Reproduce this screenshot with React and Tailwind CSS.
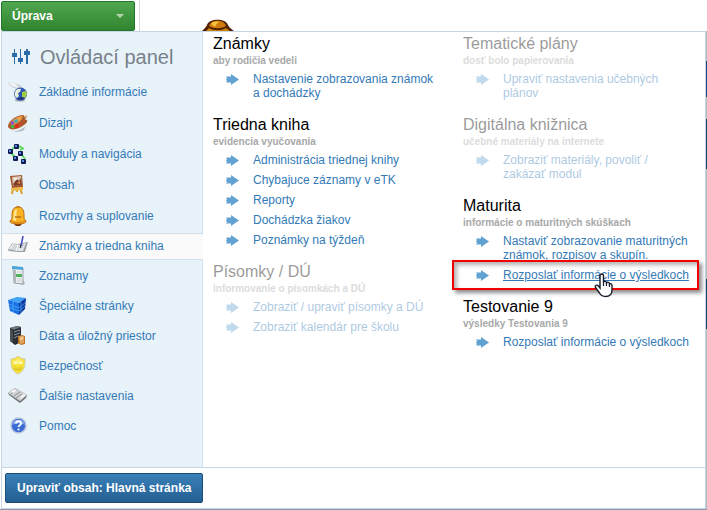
import { clsx } from 'clsx'

// Sidebar icons, all drawn on a 20x20 grid

function GlobeIcon() {
  return (
    <svg viewBox="0 0 20 20" className="size-5" aria-hidden="true">
      <path d="M0 0l11 2 4 4-5 2-8-4z" fill="#cfd5d9" />
      <path d="M1 1l8 2M3 3l7 2" stroke="#fff" strokeWidth="1.200" />
      <ellipse cx="12" cy="18" rx="5" ry="1.500" fill="#9aa4b4" />
      <circle cx="12.500" cy="12" r="6.500" fill="#2d55b5" />
      <path d="M7 10c1-3 4-4 6-3l-1 3-2 1 1 3-2 2c-2-1-3-3-2-6z" fill="#e6f3d8" />
      <path d="M14 10l4-1 1 3-2 4-3-1z" fill="#9fd043" />
      <path d="M9 17c3 2 6 1 8-1l-4-1z" fill="#22377c" />
    </svg>
  )
}

function PaletteIcon() {
  return (
    <svg viewBox="0 0 20 20" className="size-5" aria-hidden="true">
      <path d="M3 17c4 3 10 0 15-4l-3 5-7 1z" fill="#b3bbc0" />
      <path d="M0 13C1 7 9 2 15 2c4 1 1 4 3 5s1 3-2 5c-5 4-12 6-15 3-1-1-1-1-1-2z" fill="#ad5a2a" />
      <path d="M2 11C4 6 10 3 15 3l-2 5-7 4z" fill="#e09a56" />
      <circle cx="11.500" cy="5.500" r="1.700" fill="#f2a23a" />
      <circle cx="8" cy="8" r="1.800" fill="#31b3b8" />
      <circle cx="4.500" cy="10" r="1.700" fill="#8c4ad6" />
      <circle cx="4.500" cy="13.500" r="1.800" fill="#46b84c" />
      <circle cx="9" cy="13" r="2" fill="#e8261c" />
      <circle cx="13" cy="10" r="1.600" fill="#d6402a" />
      <path d="M12 9l7-6M14 11l5-4" stroke="#a35a2c" strokeWidth="1.300" />
      <path d="M16 4l3-1" stroke="#f0cf9e" strokeWidth="1.300" />
    </svg>
  )
}

function ModulesIcon() {
  const boxes = [[6, 0], [0, 5], [10, 7], [5, 12], [13, 15]]
  return (
    <svg viewBox="0 0 20 20" className="size-5" aria-hidden="true">
      <path d="M11 2l5 3M12 6l3-2M3 9l4 4M4 6l2-3M14 11l3 4" stroke="#58dc58" strokeWidth="1.800" fill="none" />
      {boxes.map(([x, y]) => (
        <g key={x}>
          <rect x={x} y={y} width="5" height="5" rx="1" fill="#101c55" />
          <rect x={x + 1} y={y + 1} width="2" height="2" fill="#5d8be0" />
        </g>
      ))}
    </svg>
  )
}

function EaselIcon() {
  return (
    <svg viewBox="0 0 20 20" className="size-5" aria-hidden="true">
      <path d="M5 12L4 19M12 13l2 6M9 12v5" stroke="#dc9f30" strokeWidth="2" />
      <path d="M2 1l12-1 1 12-11 1z" fill="#a5522b" />
      <path d="M4 2l9-1 1 9-9 1z" fill="#dccbbb" />
      <path d="M5 9l4-5 2 2 2-3 1 7-8 1z" fill="#7d3b2a" />
      <path d="M6 3h3v2H6z" fill="#f4efe7" />
      <path d="M9 8l3-2v3z" fill="#e39b48" />
      <path d="M3 13l12-1v3L4 16z" fill="#ecb94a" />
    </svg>
  )
}

function BellIcon() {
  return (
    <svg viewBox="0 0 20 20" className="size-5" aria-hidden="true">
      <ellipse cx="10" cy="18" rx="3.500" ry="2" fill="#70300c" />
      <circle cx="10" cy="2" r="2" fill="#b86a10" />
      <path d="M10 1C5 1 4 5 4 9s0 4-2 6c-1 4 17 4 16 0-2-2-2-2-2-6s-1-8-6-8z" fill="#f8b224" stroke="#b96a10" strokeWidth="1" />
      <path d="M8 3C5 5 6 10 5 14l3 1c1-4 0-8 1-11z" fill="#ffe58a" />
      <path d="M7 11h6" stroke="#b9741a" strokeWidth="1.500" />
      <path d="M3 15c3 2 11 2 14 0" stroke="#dd840f" fill="none" />
    </svg>
  )
}

function NotebookIcon() {
  return (
    <svg viewBox="0 0 20 20" className="size-5" aria-hidden="true">
      <path d="M0 14l4-7 6 1 10-2-3 10-7 0-9-1z" fill="#9aa1a8" />
      <path d="M1 13l4-6 6 2-2 6z" fill="#f3f4f5" />
      <path d="M11 9l7-2-3 8-6 0z" fill="#e3e6e8" />
      <path d="M5 9l4 0M4 11l5 0M3 13l5 0M13 10l3-1M12 12l3-1" stroke="#b3b9be" strokeWidth="1" />
      <path d="M15 0l-2 10" stroke="#4350c0" strokeWidth="1.600" />
      <path d="M13 9l-1 3" stroke="#23262d" strokeWidth="1" />
    </svg>
  )
}

function ListIcon() {
  return (
    <svg viewBox="0 0 20 20" className="size-5" aria-hidden="true">
      <path d="M6 17l10 2 1-2-2-3z" fill="#b7bfc4" />
      <path d="M5 1l10 1v16l-9-1z" fill="#eef1f2" stroke="#9aa2a8" strokeWidth="1" />
      <path d="M4 0l11 1v3L4 3z" fill="#4aa5d8" />
      <path d="M5 4l3 0v13l-2 0z" fill="#b1b8bb" />
      <path d="M8 8h6v3H8z" fill="#4cb35a" />
      <path d="M9 6h5M9 13h5M9 15h5" stroke="#c6ccd0" strokeWidth="1" />
    </svg>
  )
}

function CubeIcon() {
  return (
    <svg viewBox="0 0 20 20" className="size-5" aria-hidden="true">
      <path d="M0 4l9-3 9 1-7 5z" fill="#3d9df2" />
      <path d="M0 4l11 3v12l-9-4z" fill="#1c70e4" />
      <path d="M11 7l7-5-1 11-6 6z" fill="#0b35a0" />
      <path d="M1 8l10 4 7-6M1 11l10 4 6-5M5 3l8 3v11M12 2L5 6v10" stroke="#4db2fb" strokeWidth=".7" fill="none" />
    </svg>
  )
}

function ServerIcon() {
  return (
    <svg viewBox="0 0 20 20" className="size-5" aria-hidden="true">
      <path d="M2 2l7-2 4 1v15l-6 3-5-4z" fill="#2a2d31" />
      <path d="M2 2l7-2 4 1-7 3z" fill="#70757a" />
      <path d="M2 3l3 2v12l-3-2z" fill="#4a4e53" />
      <path d="M6 6l6-2M6 9l6-2M6 12l4-2" stroke="#8695ac" />
      <path d="M10 10l4-1 3 1v8l-4 1-3-2z" fill="#b97425" />
      <path d="M11 10l5 0v7l-4 1z" fill="#dfa35a" />
      <path d="M12 12l3-1v2l-3 1z" fill="#f6d59c" />
    </svg>
  )
}

function ShieldIcon() {
  return (
    <svg viewBox="0 0 20 20" className="size-5" aria-hidden="true">
      <path d="M3 3c3 0 5-1 7-3 2 2 4 3 7 3 0 8-1 12-7 15C4 15 3 11 3 3z" fill="#f7e33c" stroke="#d5cc9a" />
      <path d="M5 5c2 0 4-1 5-3 2 2 3 3 5 3v3H5z" fill="#fbef7c" />
      <path d="M5 10c2-1 3 1 5 1s3-2 5-1c0 3-2 5-5 6-3-1-5-3-5-6z" fill="#efd92a" />
      <path d="M6 7h3M11 7h3" stroke="#fffbd0" strokeWidth="1.500" />
      <path d="M6 12c2 2 5 2 8 0" stroke="#d0b92a" strokeWidth="1" fill="none" />
    </svg>
  )
}

function SettingsIcon() {
  return (
    <svg viewBox="0 0 20 20" className="size-5" aria-hidden="true">
      <path d="M0 7l7-5 12 7-1 3-6 5L1 9z" fill="#70757a" />
      <path d="M0 7l7-5 12 7-7 6z" fill="#d0d3d5" />
      <path d="M3 8l6-4M6 10l6-4M8 12l6-4" stroke="#8d9296" strokeWidth="1" />
      <path d="M5 4l4 0-3 3-3-1z" fill="#fafafa" />
      <path d="M12 11l4-3 2 1-5 4z" fill="#f3f4f4" />
    </svg>
  )
}

function HelpIcon() {
  return (
    <svg viewBox="0 0 20 20" className="size-5" aria-hidden="true">
      <circle cx="10.500" cy="9.500" r="7.500" fill="#3a6bd2" stroke="#b9c4e0" strokeWidth="1.500" />
      <path d="M4 9c1-7 12-7 13 0-4-2-9-2-13 0z" fill="#85aaeb" />
      <path d="M8 7.500c0-3 5-3 5 0 0 2-2.500 2-2.500 3.500" stroke="#fff" strokeWidth="1.800" fill="none" />
      <circle cx="10.500" cy="13.500" r="1.100" fill="#fff" />
    </svg>
  )
}

function SlidersIcon() {
  return (
    <svg viewBox="0 0 18 16" className="h-4 w-[18px]" fill="#2a6da6" aria-hidden="true">
      <path d="M2 0h1v15H2zM0 4h5v4H0z" />
      <path d="M8 0h1v15H8zM6 9h5v4H6z" />
      <path d="M14 0h2v15h-2zM12 2h6v4h-6z" />
    </svg>
  )
}

function ArrowIcon() {
  return (
    <svg viewBox="0 0 13 12" className="mt-0.5 ml-[13px] h-3 w-[13px] shrink-0" aria-hidden="true">
      <path d="M0 2.500h5V0l8 5.500L5 11V8.500H0l1-1.500-1-1.500 1-1.500z" fill="#62a2d3" />
    </svg>
  )
}

function HandCursor() {
  return (
    <svg viewBox="0 0 19 25" className="absolute -bottom-4 left-[131px] h-[25px] w-[19px]" aria-hidden="true">
      <path
        d="M6 15V3c0-2.600 3.500-2.600 3.500 0v6c.5-1 3-1 3 .7 1-.8 3-.3 3 1.200 1-.6 2.500 0 2.500 1.600V17c0 4-2.500 6.500-6.500 6.500-3 0-4.500-1-6-3.500l-4-5.500c-1-2 1.500-3.200 3-1.500z"
        fill="#fff"
        stroke="#1c1c2c"
        strokeWidth="1.400"
      />
      <path d="M9.500 9v4M12.500 10v3M15.500 11v3" stroke="#1c1c2c" strokeWidth="1.200" />
    </svg>
  )
}

const MENU = [
  { label: 'Základné informácie', icon: GlobeIcon, tall: true },
  { label: 'Dizajn', icon: PaletteIcon, tall: true },
  { label: 'Moduly a navigácia', icon: ModulesIcon, tall: true },
  { label: 'Obsah', icon: EaselIcon, tall: true },
  { label: 'Rozvrhy a suplovanie', icon: BellIcon },
  { label: 'Známky a triedna kniha', icon: NotebookIcon, active: true },
  { label: 'Zoznamy', icon: ListIcon },
  { label: 'Špeciálne stránky', icon: CubeIcon },
  { label: 'Dáta a úložný priestor', icon: ServerIcon },
  { label: 'Bezpečnosť', icon: ShieldIcon },
  { label: 'Ďalšie nastavenia', icon: SettingsIcon },
  { label: 'Pomoc', icon: HelpIcon },
]

const COLUMNS = [
  [
    { title: 'Známky', sub: 'aby rodičia vedeli', links: ['Nastavenie zobrazovania známok a dochádzky'] },
    {
      title: 'Triedna kniha',
      sub: 'evidencia vyučovania',
      links: ['Administrácia triednej knihy', 'Chybajuce záznamy v eTK', 'Reporty', 'Dochádzka žiakov', 'Poznámky na týždeň'],
    },
    {
      title: 'Písomky / DÚ',
      sub: 'informovanie o písomkách a DÚ',
      links: ['Zobraziť / upraviť písomky a DÚ', 'Zobraziť kalendár pre školu'],
      disabled: true,
    },
  ],
  [
    { title: 'Tematické plány', sub: 'dosť bolo papierovania', links: ['Upraviť nastavenia učebných plánov'], disabled: true },
    {
      title: 'Digitálna knižnica',
      sub: 'učebné materiály na internete',
      links: ['Zobraziť materiály, povoliť / zakázať modul'],
      disabled: true,
    },
    {
      title: 'Maturita',
      sub: 'informácie o maturitných skúškach',
      links: ['Nastaviť zobrazovanie maturitných známok, rozpisov a skupín.', 'Rozposlať informácie o výsledkoch'],
      marked: 1,
    },
    { title: 'Testovanie 9', sub: 'výsledky Testovania 9', links: ['Rozposlať informácie o výsledkoch'] },
  ],
]

function Section({ title, sub, links, disabled, marked }) {
  return (
    <section className={clsx('pb-[15px]', disabled && 'opacity-40')}>
      <h2 className="text-base leading-5 text-black">{title}</h2>
      <p className="mb-1 text-[10px] leading-[14px] font-bold text-[#a8a8a8]">{sub}</p>
      <ul className="flex flex-col gap-1.5 pr-1">
        {links.map((link, i) => (
          <li key={link} className="relative flex gap-3.5 leading-[14px]">
            <ArrowIcon />
            <a href="#" className={clsx('text-[#337ab7]', marked === i && 'underline')}>
              {link}
            </a>
            {marked === i && (
              <>
                <span className="pointer-events-none absolute -top-2 -right-2 -bottom-2 -left-[11px] border-2 border-[#f00000] shadow-[3px_3px_4px_rgba(0,0,0,0.45),inset_3px_3px_4px_rgba(0,0,0,0.3)]" />
                <HandCursor />
              </>
            )}
          </li>
        ))}
      </ul>
    </section>
  )
}

function Header() {
  return (
    <header className="flex h-[31px] pl-px">
      <button
        type="button"
        className="mt-px flex h-[30px] w-[134px] items-center justify-between rounded-xs border border-[#23752a] bg-linear-to-b from-[#4fa84f] to-[#31842f] pr-2.5 pl-2.5 text-xs font-bold text-white"
      >
        Úprava
        <span className="border-x-4 border-t-4 border-x-transparent border-t-[#b5d5b2]" />
      </button>
      <div className="ml-1 w-px bg-[#d5d8dc]" />
      {/* Bell of the page behind, cut off by the panel */}
      <svg viewBox="0 0 32 12" className="mt-[19px] ml-[62px] h-3 w-8" aria-hidden="true">
        <path d="M0 12C4 8 4 8 5 6 7-1 24-1 26 6c1 2 2 3 6 6z" fill="#522000" />
        <path d="M7 7C9 0 22 0 24 7c-5 3-12 3-17 0z" fill="#cf7a0c" />
        <path d="M9 5c1-3 7-3 8-2-2 1-3 3-4 5z" fill="#f7c23c" />
        <path d="M4 12l3-3c5 3 12 3 17 0l4 3z" fill="#c98509" />
      </svg>
    </header>
  )
}

function Sidebar() {
  return (
    <nav className="w-[201px] shrink-0 border-r border-[#d3e1ef] bg-[#e8f2f9] pb-[27px]">
      <h1 className="flex h-[47px] items-center gap-2.5 pt-0.5 pl-2.5 text-xl text-[#77818a]">
        <SlidersIcon />
        Ovládací panel
      </h1>
      <ul className="flex flex-col gap-[3px]">
        {MENU.map(({ label, icon: Icon, tall, active }) => (
          <li
            key={label}
            className={clsx(
              'border-y',
              tall ? 'h-7' : 'h-[27px]',
              active ? '-mr-px border-[#d3e1ef] bg-[#fafafa]' : 'border-transparent',
            )}
          >
            <a href="#" className="flex h-full items-center gap-[11px] pb-0.5 pl-1.5 text-[#337ab7]">
              <Icon />
              {label}
            </a>
          </li>
        ))}
      </ul>
    </nav>
  )
}

export default function App() {
  return (
    <div className="bg-white font-['Liberation_Sans',Arial,sans-serif] text-xs">
      <Header />
      <div className="flex border-b border-[#8d9aa5] pl-px">
        <div className="min-w-0 flex-1 border border-[#c6d6e4] bg-white">
          <div className="flex">
            <Sidebar />
            <main className="grid flex-1 grid-cols-2 gap-[18px] px-2.5 pt-0.5">
              {COLUMNS.map((sections, i) => (
                <div key={i}>
                  {sections.map(section => (
                    <Section key={section.title} {...section} />
                  ))}
                </div>
              ))}
            </main>
          </div>
          <footer className="border-t border-[#c6d6e4] px-[3px] py-[5px]">
            <button
              type="button"
              className="h-[30px] rounded-xs border border-[#1a4f7c] bg-linear-to-b from-[#3a80b8] to-[#245f92] px-[11px] text-xs font-bold text-white"
            >
              Upraviť obsah: Hlavná stránka
            </button>
          </footer>
        </div>
        {/* Edge of the page behind */}
        <div className="flex w-px flex-col bg-[#b4b8bc]">
          <div className="mt-[30px] h-9 bg-[#1c4f84]" />
          <div className="mt-[22px] h-[50px] bg-[#1c3f64]" />
          <div className="mt-[110px] h-[50px] bg-[#1c3f64]" />
        </div>
      </div>
    </div>
  )
}
